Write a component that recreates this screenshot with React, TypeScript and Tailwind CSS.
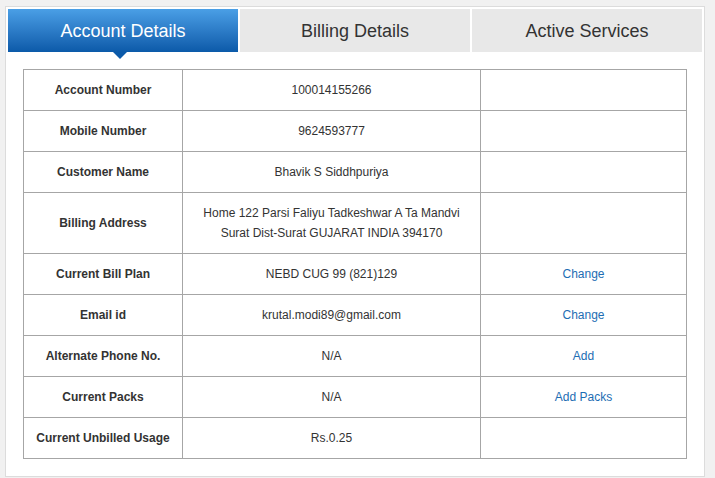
import React from "react";

const rows: { label: string; value: React.ReactNode; action?: string; tall?: boolean }[] = [
  { label: "Account Number", value: "100014155266" },
  { label: "Mobile Number", value: "9624593777" },
  { label: "Customer Name", value: "Bhavik S Siddhpuriya" },
  {
    label: "Billing Address",
    value: (
      <>
        Home 122 Parsi Faliyu Tadkeshwar A Ta Mandvi
        <br />
        Surat Dist-Surat GUJARAT INDIA 394170
      </>
    ),
    tall: true,
  },
  { label: "Current Bill Plan", value: "NEBD CUG 99 (821)129", action: "Change" },
  { label: "Email id", value: "krutal.modi89@gmail.com", action: "Change" },
  { label: "Alternate Phone No.", value: "N/A", action: "Add" },
  { label: "Current Packs", value: "N/A", action: "Add Packs" },
  { label: "Current Unbilled Usage", value: "Rs.0.25" },
];

export default function App() {
  return (
    <div
      className="w-[715px] h-[478px] bg-[#f1f1f1] pt-[6px] pl-[5px]"
      style={{ fontFamily: '"Liberation Sans", Arial, sans-serif' }}
    >
      <div className="w-[700px] h-[471px] bg-white border border-[#dcdcdc] px-[2px] pt-[2px]">
        <div className="flex gap-[2px]">
          <div className="relative flex-1 h-[43px] pt-[2px] flex items-center justify-center text-[18px] text-white bg-gradient-to-b from-[#4a9fe6] to-[#0b5aa9]">
            Account Details
            <div className="absolute left-[105px] top-[43px] w-0 h-0 border-l-[7px] border-r-[7px] border-t-[7px] border-l-transparent border-r-transparent border-t-[#0b5aa9]" />
          </div>
          <div className="flex-1 h-[43px] pt-[2px] flex items-center justify-center text-[18px] text-[#333] bg-[#e8e8e8]">
            Billing Details
          </div>
          <div className="flex-1 h-[43px] pt-[2px] flex items-center justify-center text-[18px] text-[#333] bg-[#e8e8e8]">
            Active Services
          </div>
        </div>
        <div className="pl-[15px] pt-[17px]">
          <table className="border-collapse w-[664px] text-[12px] text-[#333]">
            <colgroup>
              <col className="w-[159px]" />
              <col className="w-[298px]" />
              <col className="w-[206px]" />
            </colgroup>
            <tbody>
              {rows.map((r) => (
                <tr key={r.label} className={r.tall ? "h-[61px]" : "h-[41px]"}>
                  <td className="border border-[#a6a6a6] text-center font-bold p-0">{r.label}</td>
                  <td className="border border-[#a6a6a6] text-center p-0 leading-[20px]">{r.value}</td>
                  <td className="border border-[#a6a6a6] text-center p-0 text-[#1d6db3]">
                    {r.action ?? ""}
                  </td>
                </tr>
              ))}
            </tbody>
          </table>
        </div>
      </div>
    </div>
  );
}
